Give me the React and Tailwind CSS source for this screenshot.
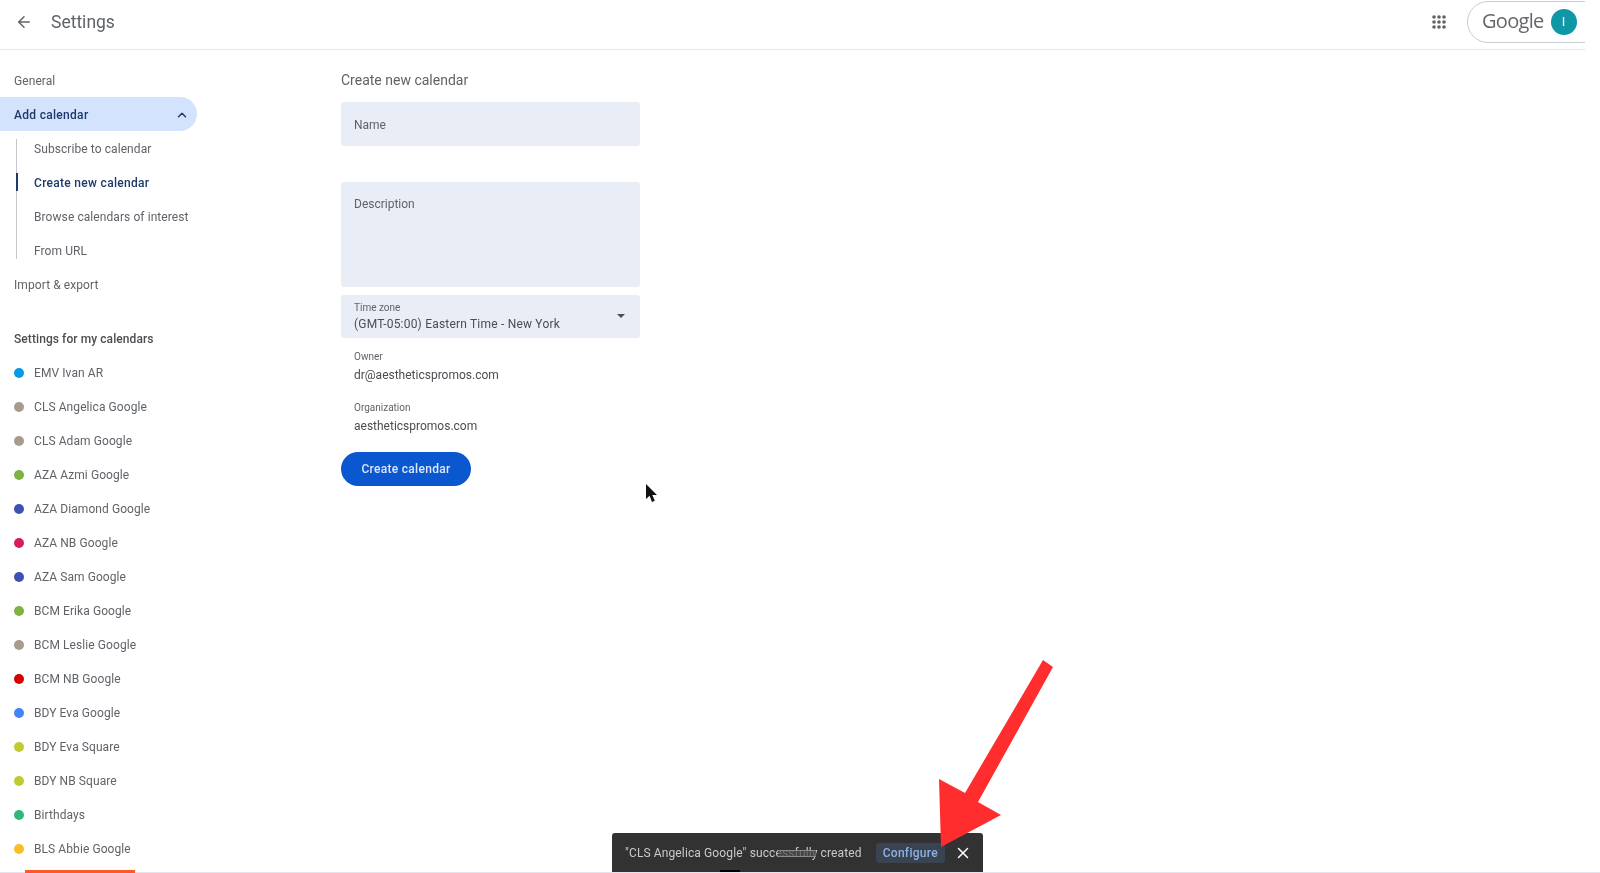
import React from 'react';
import { ArrowLeft, ChevronUp, X } from 'lucide-react';

const subItems = ['Subscribe to calendar', 'Create new calendar', 'Browse calendars of interest', 'From URL'];

const calendars = [
  { name: 'EMV Ivan AR', dot: 'bg-[#039be5]' },
  { name: 'CLS Angelica Google', dot: 'bg-[#a79b8e]' },
  { name: 'CLS Adam Google', dot: 'bg-[#a79b8e]' },
  { name: 'AZA Azmi Google', dot: 'bg-[#7cb342]' },
  { name: 'AZA Diamond Google', dot: 'bg-[#3f51b5]' },
  { name: 'AZA NB Google', dot: 'bg-[#d81b60]' },
  { name: 'AZA Sam Google', dot: 'bg-[#3f51b5]' },
  { name: 'BCM Erika Google', dot: 'bg-[#7cb342]' },
  { name: 'BCM Leslie Google', dot: 'bg-[#a79b8e]' },
  { name: 'BCM NB Google', dot: 'bg-[#d50000]' },
  { name: 'BDY Eva Google', dot: 'bg-[#4285f4]' },
  { name: 'BDY Eva Square', dot: 'bg-[#c0ca33]' },
  { name: 'BDY NB Square', dot: 'bg-[#c0ca33]' },
  { name: 'Birthdays', dot: 'bg-[#33b679]' },
  { name: 'BLS Abbie Google', dot: 'bg-[#f6bf26]' },
];

function AppsIcon() {
  const dots = [];
  for (const y of [3, 8, 13]) {
    for (const x of [3, 8, 13]) {
      dots.push(<circle key={`${x}-${y}`} cx={x} cy={y} r="1.8" />);
    }
  }
  return (
    <svg width="16" height="16" viewBox="0 0 16 16" fill="#5f6368">
      {dots}
    </svg>
  );
}

function Sidebar() {
  return (
    <nav className="w-[341px] shrink-0 pt-[13px] text-[12px] tracking-[0.08px] text-[#5f6368]">
      <div className="h-[34px] flex items-center pl-[14px] pt-px">General</div>
      <div className="h-[34px] w-[197px] flex items-center justify-between pl-[14px] pr-[8px] pt-px rounded-r-full bg-[#d3e3fd] text-[#1f3a68] font-medium tracking-[0.3px]">
        Add calendar
        <ChevronUp className="h-[14px] w-[14px]" strokeWidth={2.5} />
      </div>
      <div className="relative">
        <div className="absolute left-[16px] top-[8px] bottom-[8px] w-px bg-[#c4c7cc]"></div>
        {subItems.map((item) => (
          <div
            key={item}
            className={`relative h-[34px] flex items-center pl-[34px] pt-px ${item === 'Create new calendar' ? 'text-[#1f3a68] font-medium tracking-[0.3px]' : ''}`}
          >
            {item === 'Create new calendar' && (
              <span className="absolute left-[16px] top-[8px] h-[18px] w-[2px] bg-[#1f3a68]"></span>
            )}
            {item}
          </div>
        ))}
      </div>
      <div className="h-[34px] flex items-center pl-[14px] pt-px">Import &amp; export</div>
      <div className="h-[34px] mt-[20px] flex items-center pl-[14px] pt-px font-medium text-[#4a4d51]">Settings for my calendars</div>
      {calendars.map((cal) => (
        <div key={cal.name} className="h-[34px] flex items-center pl-[14px] gap-[10px] pt-px">
          <span className={`h-[10px] w-[10px] rounded-full ${cal.dot}`}></span>
          {cal.name}
        </div>
      ))}
    </nav>
  );
}

function CreateForm() {
  return (
    <main className="w-[299px] pt-[20px] text-[12px] text-[#5f6368]">
      <h2 className="h-[20px] flex items-center text-[14px] text-[#5f6368]">Create new calendar</h2>
      <div className="mt-[12px] h-[44px] flex items-center px-[13px] pt-px rounded-[3px] bg-[#e8edf6]">Name</div>
      <div className="mt-[36px] h-[105px] px-[13px] pt-[13px] rounded-[3px] bg-[#e8edf6]">Description</div>
      <div className="mt-[8px] h-[43px] flex items-center justify-between pl-[13px] pr-[15px] rounded-[3px] bg-[#e8edf6]">
        <div>
          <div className="text-[10px] leading-[13px]">Time zone</div>
          <div className="text-[#4a4d51] leading-[18px] mt-[1px] tracking-[0.2px]">(GMT-05:00) Eastern Time - New York</div>
        </div>
        <span className="h-0 w-0 border-x-[4px] border-t-[4px] border-x-transparent border-t-[#4a4d51] mb-[1px]"></span>
      </div>
      <div className="mt-[12px] pl-[13px]">
        <div className="text-[10px] leading-[14px]">Owner</div>
        <div className="leading-[18px] mt-[2px] text-[#4a4d51]">dr@aestheticspromos.com</div>
        <div className="text-[10px] leading-[14px] mt-[17px]">Organization</div>
        <div className="leading-[18px] mt-[2px] text-[#4a4d51]">aestheticspromos.com</div>
      </div>
      <button className="mt-[17px] h-[34px] w-[130px] rounded-full bg-[#0b57d0] text-[#dbe6fa] text-[12px] font-medium tracking-[0.3px]">
        Create calendar
      </button>
    </main>
  );
}

export default function App() {
  return (
    <div className="relative h-[873px] w-[1600px] overflow-hidden bg-white font-['Roboto',sans-serif] blur-[0.4px]">
      <div className="w-[1585px] overflow-hidden">
        <header className="h-[50px] flex items-center border-b border-[#e6e7e9] pl-[15px] pb-[5px]">
          <ArrowLeft className="h-[18px] w-[18px] text-[#5f6368]" strokeWidth={2} />
          <h1 className="ml-[18px] text-[17.5px] text-[#5f6368]">Settings</h1>
          <div className="ml-auto mr-[20px]">
            <AppsIcon />
          </div>
          <div className="h-[42px] w-[150px] shrink-0 -mr-[32px] flex items-center gap-[7px] pl-[14px] rounded-full border border-[#c9ccd0] bg-white">
            <span className="font-['Open_Sans',sans-serif] font-medium text-[20px] tracking-[-0.7px] text-[#63666a] -mt-[2px]">Google</span>
            <span className="h-[26px] w-[26px] flex items-center justify-center rounded-full bg-[#0f97a5] text-[13px] text-white">I</span>
          </div>
        </header>
        <div className="flex">
          <Sidebar />
          <CreateForm />
        </div>
      </div>

      {/* mouse pointer */}
      <svg className="absolute left-[645px] top-[484px]" width="12" height="20" viewBox="0 0 12 20" fill="#111">
        <path d="M1 0v15l3.6-3.2L7 18l2.8-1.2-2.5-5.8H12z" />
      </svg>

      {/* snackbar */}
      <div className="absolute left-[612px] top-[833px] h-[40px] w-[371px] flex items-center pl-[13px] rounded-t-[3px] bg-[#323232] text-[12px] text-[#c9cacb]">
        <span className="whitespace-nowrap tracking-[0.12px]">"CLS Angelica Google" successfully created</span>
        <span className="ml-[14px] h-[20px] flex items-center px-[7px] rounded-[3px] bg-[#3a4350] text-[#8fb0e6] font-medium tracking-[0.3px]">Configure</span>
        <X className="ml-[9px] h-[18px] w-[18px] text-white" strokeWidth={2} />
        <span className="absolute left-[166px] top-[17px] h-[7px] w-[38px] border-y border-[#8a8b8c] bg-[#4a4a4a]/70"></span>
        <span className="absolute left-[108px] bottom-0 h-[3px] w-[20px] bg-black"></span>
      </div>

      {/* red annotation arrow */}
      <svg className="absolute left-0 top-0" width="1600" height="873" viewBox="0 0 1600 873" fill="#ff2d2d">
        <path d="M1043 660L1053 667L978 802L1001 815L941 847L939 779L965 793Z" />
      </svg>

      {/* bottom edge of the recording */}
      <div className="absolute left-0 right-0 bottom-0 h-px bg-[#e4e4ee]"></div>
      <div className="absolute left-[25px] bottom-0 h-[3px] w-[110px] bg-[#ff5a26]"></div>
    </div>
  );
}
